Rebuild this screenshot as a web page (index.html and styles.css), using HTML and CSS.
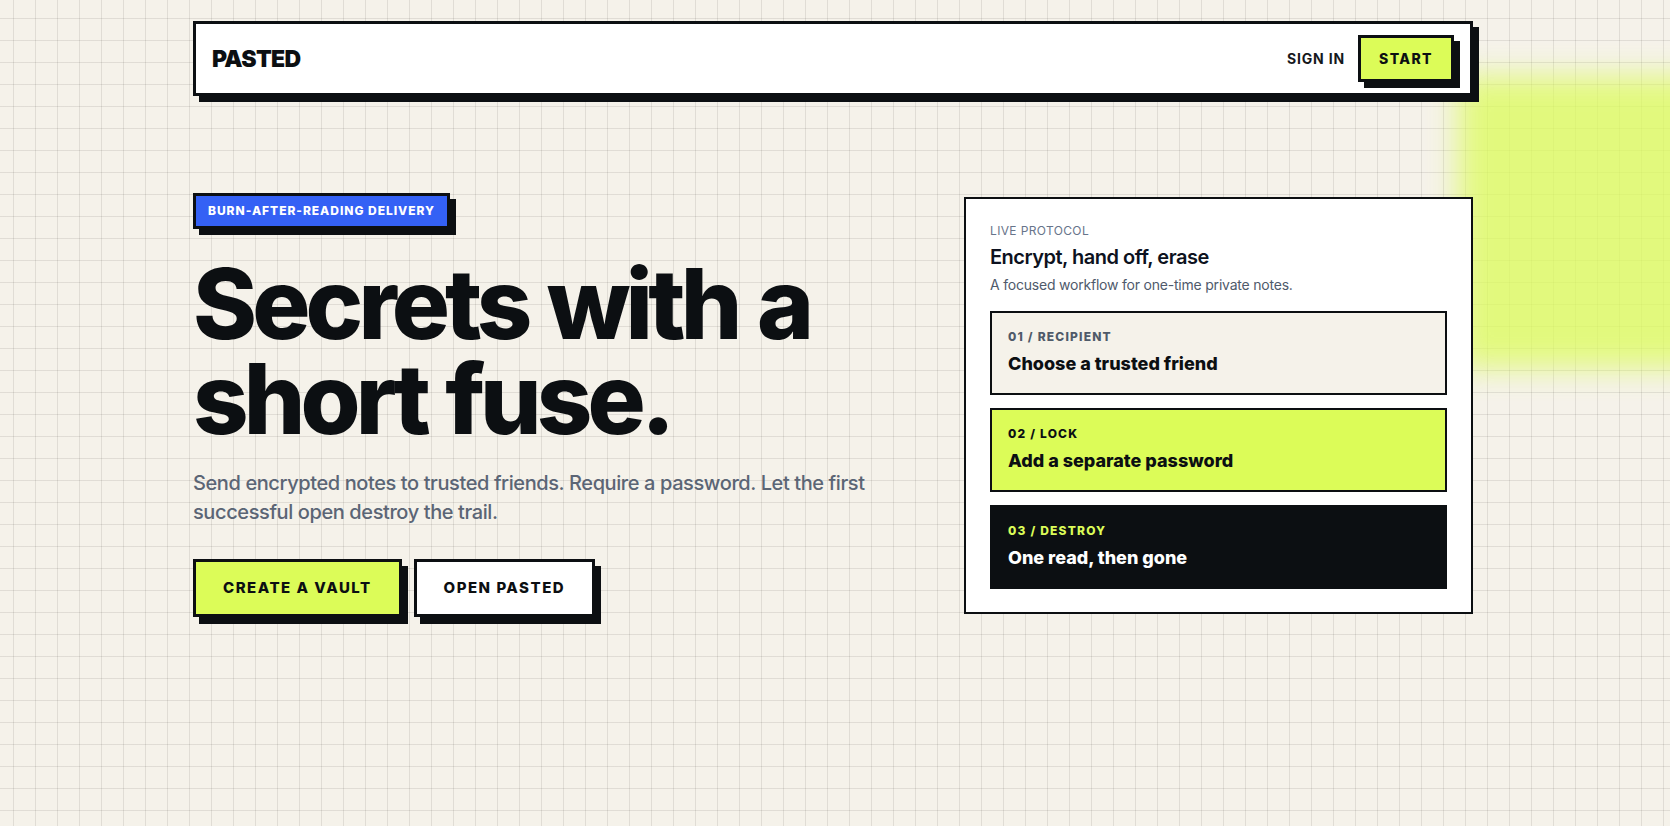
FILE: index.html
```html
<!DOCTYPE html>
<html lang="en">
<head>
<meta charset="utf-8">
<title>Pasted — Secrets with a short fuse</title>
<link rel="stylesheet" href="styles.css">
</head>
<body>
  <div class="glow"></div>
  <div class="page">
    <header class="nav">
      <a class="logo" href="#">PASTED</a>
      <nav class="nav-actions">
        <a class="signin" href="#">SIGN IN</a>
        <a class="btn btn-lime btn-sm" href="#">START</a>
      </nav>
    </header>

    <main class="hero">
      <section class="hero-copy">
        <span class="badge">BURN-AFTER-READING DELIVERY</span>
        <h1>Secrets with a<br>short fuse.</h1>
        <p class="lead">Send encrypted notes to trusted friends. Require a password. Let the first successful open destroy the trail.</p>
        <div class="cta">
          <a class="btn btn-lime" href="#">CREATE A VAULT</a>
          <a class="btn btn-white" href="#">OPEN PASTED</a>
        </div>
      </section>

      <aside class="card">
        <div class="eyebrow">LIVE PROTOCOL</div>
        <h2 class="card-title">Encrypt, hand off, erase</h2>
        <p class="card-desc">A focused workflow for one-time private notes.</p>
        <ol class="steps">
          <li class="step step-cream">
            <span class="step-label">01 / RECIPIENT</span>
            <span class="step-title">Choose a trusted friend</span>
          </li>
          <li class="step step-lime">
            <span class="step-label">02 / LOCK</span>
            <span class="step-title">Add a separate password</span>
          </li>
          <li class="step step-dark">
            <span class="step-label">03 / DESTROY</span>
            <span class="step-title">One read, then gone</span>
          </li>
        </ol>
      </aside>
    </main>
  </div>
</body>
</html>
```

FILE: styles.css
```css
* {
  box-sizing: border-box;
}

html,
body {
  margin: 0;
}

body {
  position: relative;
  min-height: 100vh;
  padding: 0 4px 0 0;
  overflow: hidden;
  font-family: Inter, "Noto Sans", "Liberation Sans", sans-serif;
  color: #0c0f12;
  background-color: #f5f2ea;
  background-image:
    linear-gradient(to right, rgba(40, 36, 30, 0.1) 1px, transparent 1px),
    linear-gradient(to bottom, rgba(40, 36, 30, 0.1) 1px, transparent 1px);
  background-size: 22px 22px;
  background-position: 13px 18px;
}

a {
  color: inherit;
  text-decoration: none;
}

.glow {
  position: absolute;
  top: 76px;
  left: 1458px;
  width: 300px;
  height: 292px;
  background: #dcfc58;
  opacity: 0.74;
  filter: blur(15px);
  z-index: 0;
}

.page {
  position: relative;
  z-index: 1;
  max-width: 1280px;
  margin: 0 auto;
  padding-top: 21px;
}

/* ---------- nav ---------- */
.nav {
  display: flex;
  align-items: center;
  justify-content: space-between;
  background: #ffffff;
  border: 3px solid #0c0f12;
  box-shadow: 6px 6px 0 #0c0f12;
  padding: 11px 16px;
}

.logo {
  font-size: 23px;
  font-weight: 900;
  letter-spacing: -0.03em;
  line-height: 28px;
}

.nav-actions {
  display: flex;
  align-items: center;
  gap: 13px;
}

.signin {
  font-size: 14px;
  font-weight: 700;
  letter-spacing: 0.06em;
  color: #15181c;
}

/* ---------- buttons ---------- */
.btn {
  display: inline-block;
  border: 3px solid #0c0f12;
  box-shadow: 6px 7px 0 #0c0f12;
  padding: 17px 27px;
  font-size: 15px;
  line-height: 18px;
  font-weight: 800;
  letter-spacing: 0.1em;
  color: #0c0f12;
}

.btn-sm {
  padding: 12px 18px;
  font-size: 14px;
  line-height: 17px;
  letter-spacing: 0.1em;
  box-shadow: 6px 6px 0 #0c0f12;
}

.btn-lime {
  background: #dcfc58;
}

.btn-white {
  background: #ffffff;
}

/* ---------- hero ---------- */
.hero {
  display: grid;
  grid-template-columns: minmax(0, 1fr) 509px;
  align-items: center;
  padding-top: 97px;
}

.hero-copy {
  display: flex;
  flex-direction: column;
  align-items: flex-start;
}

.badge {
  display: inline-block;
  background: #3461f5;
  color: #ffffff;
  border: 3px solid #0c0f12;
  box-shadow: 6px 6px 0 #0c0f12;
  padding: 6px 12px;
  font-size: 12px;
  line-height: 18px;
  font-weight: 800;
  letter-spacing: 0.08em;
}

h1 {
  margin: 27px 0 0;
  font-size: 97px;
  line-height: 95px;
  font-weight: 800;
  letter-spacing: -0.05em;
  word-spacing: 3px;
  color: #0c0f12;
}

.lead {
  margin: 23px 0 0;
  max-width: 700px;
  font-size: 20px;
  line-height: 29px;
  font-weight: 500;
  letter-spacing: -0.02em;
  color: #5b6575;
}

.cta {
  display: flex;
  gap: 12px;
  margin-top: 32px;
}

/* ---------- card ---------- */
.card {
  background: #ffffff;
  border: 2px solid #0c0f12;
  padding: 24px 24px 23px;
}

.eyebrow {
  font-size: 12px;
  line-height: 16px;
  letter-spacing: 0.03em;
  color: #67748a;
}

.card-title {
  margin: 4px 0 0;
  font-size: 20px;
  line-height: 28px;
  font-weight: 600;
  letter-spacing: -0.025em;
  color: #0d1220;
}

.card-desc {
  margin: 4px 0 0;
  font-size: 14px;
  line-height: 20px;
  letter-spacing: -0.015em;
  color: #4f5a6b;
}

.steps {
  list-style: none;
  margin: 16px 0 0;
  padding: 0;
  display: flex;
  flex-direction: column;
  gap: 13px;
}

.step {
  display: flex;
  flex-direction: column;
  gap: 6px;
  border: 2px solid #0c0f12;
  padding: 16px;
}

.step-label {
  font-size: 12px;
  line-height: 16px;
  font-weight: 800;
  letter-spacing: 0.1em;
}

.step-title {
  font-size: 18px;
  line-height: 26px;
  font-weight: 800;
  letter-spacing: 0;
}

.step-cream {
  background: #f5f2ea;
}

.step-cream .step-label {
  color: #4f5a69;
}

.step-lime {
  background: #dcfc58;
}

.step-dark {
  background: #0c0f12;
  color: #ffffff;
}

.step-dark .step-label {
  color: #dcfc58;
}
```
